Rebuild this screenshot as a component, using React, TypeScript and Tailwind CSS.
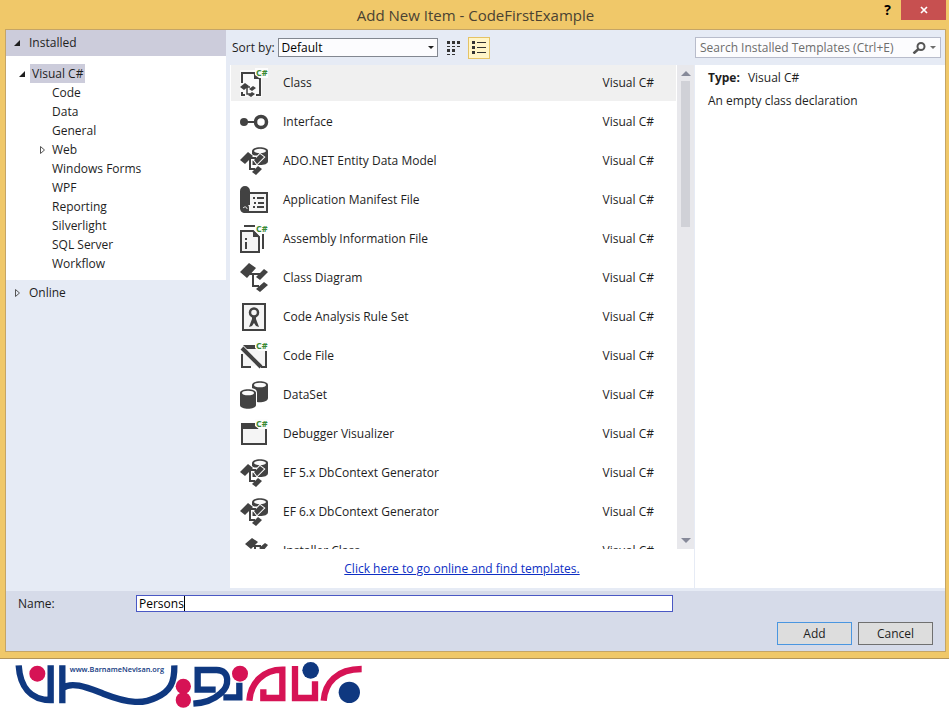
import { useState, type ReactNode } from 'react';

type IconName =
  | 'class'
  | 'interface'
  | 'entity'
  | 'manifest'
  | 'assembly'
  | 'diagram'
  | 'ruleset'
  | 'codefile'
  | 'dataset'
  | 'visualizer'
  | 'installer';

const templates: { name: string; icon: IconName }[] = [
  { name: 'Class', icon: 'class' },
  { name: 'Interface', icon: 'interface' },
  { name: 'ADO.NET Entity Data Model', icon: 'entity' },
  { name: 'Application Manifest File', icon: 'manifest' },
  { name: 'Assembly Information File', icon: 'assembly' },
  { name: 'Class Diagram', icon: 'diagram' },
  { name: 'Code Analysis Rule Set', icon: 'ruleset' },
  { name: 'Code File', icon: 'codefile' },
  { name: 'DataSet', icon: 'dataset' },
  { name: 'Debugger Visualizer', icon: 'visualizer' },
  { name: 'EF 5.x DbContext Generator', icon: 'entity' },
  { name: 'EF 6.x DbContext Generator', icon: 'entity' },
  { name: 'Installer Class', icon: 'installer' },
];

const categories = [
  'Code',
  'Data',
  'General',
  'Web',
  'Windows Forms',
  'WPF',
  'Reporting',
  'Silverlight',
  'SQL Server',
  'Workflow',
];

const DARK = '#424242';

function CSharpMark() {
  return (
    <>
      <path d="M15 -1h13v10H19l-4-3z" fill="#fdfdfd" />
      <text x="16" y="7" fontSize="9" fontWeight="700" fill="#388a34" fontFamily="'Open Sans', sans-serif">
        C#
      </text>
    </>
  );
}

const drawings: Record<IconName, ReactNode> = {
  class: (
    <>
      <path d="M0 1h22v27H0z" fill="#fafafa" />
      <path d="M2 14V4h12l6 6v16h-4" fill="none" stroke={DARK} strokeWidth="2" />
      <path d="M14 3l7 7h-7z" fill={DARK} />
      <path d="M0 18l5-4 4 3-5 4zM9 20l4-3 3 2-4 3zM8 26l4-3 3 2-4 3zM1 23h2v2h2v2H1z" fill={DARK} />
      <path d="M4 18h6M7 18v7h3" fill="none" stroke={DARK} strokeWidth="1.5" />
      <CSharpMark />
    </>
  ),
  interface: (
    <>
      <circle cx="4" cy="14" r="4" fill={DARK} />
      <path d="M7 14h8" stroke={DARK} strokeWidth="2" />
      <circle cx="21" cy="14" r="5.5" fill="none" stroke={DARK} strokeWidth="3.5" />
    </>
  ),
  entity: (
    <>
      <path d="M12 4c0-5 16-5 16 0v10c0 3-4 4-8 4h-8z" fill={DARK} />
      <ellipse cx="20" cy="4" rx="6" ry="2.2" fill="#fafafa" />
      <path d="M7 11h10M10 11v11h6" fill="none" stroke="#ffffff" strokeWidth="5" />
      <path
        d="M0 13l8-8 5 4-8 8zM14 13l6-6 4 3-7 7zM12 25l6-6 4 3-6 6z"
        fill={DARK}
        stroke="#ffffff"
        strokeWidth="2"
        paintOrder="stroke"
      />
      <path d="M8 11h8M10 11v11h5" fill="none" stroke={DARK} strokeWidth="2" />
    </>
  ),
  manifest: (
    <>
      <path d="M9 7h18v19H7" fill="#f5f5f5" stroke={DARK} strokeWidth="2" />
      <path d="M0 5a5 5 0 0 1 10 0v14H5c-3 0-5 2-5 4z" fill={DARK} />
      <path d="M0 22c0-6 9-5 9-1v6H5c-3 0-5-2-5-5z" fill={DARK} />
      <path d="M3 22c2-2 4-1 4 1" fill="none" stroke="#f5f5f5" strokeWidth="1" />
      <path d="M13 12h2M17 12h7M14 17h2M18 17h6M13 21h2M17 21h7" stroke={DARK} strokeWidth="2" />
    </>
  ),
  assembly: (
    <>
      <path d="M4 1h12M23 8v16" fill="none" stroke={DARK} strokeWidth="2" />
      <path d="M1 6h12l6 6v15H1z" fill="#f5f5f5" stroke={DARK} strokeWidth="2" />
      <path d="M13 5l7 7h-7z" fill={DARK} />
      <path d="M6 13v2M6 17v7" stroke={DARK} strokeWidth="2" />
      <CSharpMark />
    </>
  ),
  diagram: (
    <>
      <path d="M0 8L9-1l7 5-9 10zM16 13l8-8 4 3-8 8zM16 25l8-7 4 3-8 7z" fill={DARK} />
      <path d="M10 10h10M13 10v12h6" fill="none" stroke={DARK} strokeWidth="2" />
    </>
  ),
  ruleset: (
    <>
      <rect x="3" y="1" width="22" height="26" fill="#f5f5f5" stroke={DARK} strokeWidth="2" />
      <circle cx="14" cy="9.5" r="4" fill="none" stroke={DARK} strokeWidth="2.5" />
      <path d="M12 14h4v2l3 8-3-1-2-3-2 3-3 1 3-8z" fill={DARK} />
    </>
  ),
  codefile: (
    <>
      <path d="M2 4h24v20H2z" fill="#f5f5f5" />
      <path d="M3 3h15v4H7z" fill={DARK} />
      <path d="M2 12v13h9M26 9v16h-5" fill="none" stroke={DARK} strokeWidth="2" />
      <path d="M2 6l19 19" stroke={DARK} strokeWidth="4" />
      <CSharpMark />
    </>
  ),
  dataset: (
    <>
      <path d="M12 4c0-5 16-5 16 0v13c0 4-8 5-11 4V12c0-4-3-4-5-5z" fill={DARK} />
      <ellipse cx="20" cy="4" rx="6" ry="2.3" fill="#fafafa" />
      <path d="M0 12c0-5 16-5 16 0v12c0 5-16 5-16 0z" fill={DARK} />
      <ellipse cx="8" cy="12" rx="6" ry="2.3" fill="#fafafa" />
    </>
  ),
  visualizer: (
    <>
      <path d="M2 4h24v20H2z" fill="#f5f5f5" stroke={DARK} strokeWidth="2" />
      <path d="M1 3h15v3l3 3H1z" fill={DARK} />
      <CSharpMark />
    </>
  ),
  installer: (
    <>
      <path d="M5 7l7-6 6 4-7 7zM19 11l6-5 3 2-5 6zM18 25l6-6 4 3-6 6z" fill={DARK} />
      <path d="M12 9h9M15 9v13h5" fill="none" stroke={DARK} strokeWidth="2" />
    </>
  ),
};

function TemplateIcon({ name }: { name: IconName }) {
  return (
    <svg viewBox="0 0 28 28" className="w-7 h-7 overflow-visible shrink-0" aria-hidden="true">
      {drawings[name]}
    </svg>
  );
}

function ExpandedArrow() {
  return (
    <svg viewBox="0 0 8 8" className="w-2 h-2 shrink-0" aria-hidden="true">
      <path d="M7 1v6H1z" fill="#1e1e1e" />
    </svg>
  );
}

function CollapsedArrow() {
  return (
    <svg viewBox="0 0 8 8" className="w-2 h-2 shrink-0" aria-hidden="true">
      <path d="M2.5 0.5v7l4-3.500z" fill="none" stroke="#555555" />
    </svg>
  );
}

function TitleBar() {
  return (
    <header className="relative flex justify-center items-center h-[29px]">
      <h1 className="text-[#4a4232] text-[15px] leading-5">Add New Item - CodeFirstExample</h1>
      <div className="top-0 right-0 absolute flex items-start">
        <button className="px-[10px] h-5 font-bold text-[14px] text-black leading-5" title="Help">
          ?
        </button>
        <button className="flex justify-center items-center bg-[#c75050] w-[45px] h-5" title="Close">
          <svg viewBox="0 0 8 8" className="w-2 h-2" aria-hidden="true">
            <path d="M1 1l6 6M7 1L1 7" stroke="#ffffff" strokeWidth="1.7" />
          </svg>
        </button>
      </div>
    </header>
  );
}

function Sidebar() {
  return (
    <nav className="bg-[#e6ebf5] w-[220px] shrink-0">
      <button className="flex items-center gap-2 bg-[#ccccdb] px-[7px] w-full h-[26px]">
        <ExpandedArrow />
        Installed
      </button>
      <div className="bg-white pt-2 pb-[7px]">
        <button className="flex items-center gap-1 pl-3 h-[19px]">
          <ExpandedArrow />
          <span className="bg-[#ccccdb] px-[2px] leading-[19px]">Visual C#</span>
        </button>
        <ul>
          {categories.map((category) => (
            <li key={category} className="flex items-center gap-[6px] pl-8 h-[19px]">
              {category === 'Web' ? <CollapsedArrow /> : <span className="w-2" />}
              <button>{category}</button>
            </li>
          ))}
        </ul>
      </div>
      <button className="flex items-center gap-2 px-[7px] h-[26px]">
        <CollapsedArrow />
        Online
      </button>
    </nav>
  );
}

function Toolbar() {
  return (
    <div className="flex items-center pl-[6px] h-[35px]">
      <label htmlFor="sort" className="mr-[3px]">
        Sort by:
      </label>
      <div className="relative">
        <select
          id="sort"
          className="bg-[#fcfcfe] px-[3px] border border-[#828790] w-40 h-[19px] text-black leading-4 appearance-none"
        >
          <option>Default</option>
        </select>
        <svg viewBox="0 0 6 4" className="top-2 right-1 absolute w-[6px] h-1 pointer-events-none" aria-hidden="true">
          <path d="M0 0h6L3 3z" fill="#1e1e1e" />
        </svg>
      </div>
      <button className="flex justify-center items-center ml-[5px] w-[22px] h-[22px]" title="Small Icons">
        <svg viewBox="0 0 14 14" className="w-[14px] h-[14px]" aria-hidden="true">
          <path d="M0 0h3v3H0zM5 0h3v3H5zM10 0h3v3h-3zM0 8h3v3H0zM5 8h3v3H5z" fill="#333333" />
          <path d="M0 5.500h3M5 5.500h3M10 5.500h3M0 13.500h3M5 13.500h3" stroke="#333333" />
        </svg>
      </button>
      <button
        className="flex justify-center items-center bg-[#fff5c8] ml-[3px] border border-[#e5c365] w-[22px] h-[22px]"
        title="Medium Icons"
      >
        <svg viewBox="0 0 14 14" className="w-[14px] h-[14px]" aria-hidden="true">
          <path d="M0 0h3v3H0zM0 5h3v3H0zM0 10h3v3H0z" fill="#333333" />
          <path d="M5 1.500h9M5 6.500h9M5 11.500h9" stroke="#333333" />
        </svg>
      </button>
    </div>
  );
}

function ScrollBar() {
  return (
    <div className="flex flex-col items-center bg-[#e8e8ec] py-[6px] w-[17px] shrink-0">
      <svg viewBox="0 0 10 5" className="w-[10px] h-[5px]" aria-hidden="true">
        <path d="M0 5h10L5 0z" fill="#868999" />
      </svg>
      <div className="bg-[#d0d1d7] mt-[5px] w-[9px] h-[146px]" />
      <svg viewBox="0 0 10 5" className="mt-auto w-[10px] h-[5px]" aria-hidden="true">
        <path d="M0 0h10L5 5z" fill="#868999" />
      </svg>
    </div>
  );
}

function TemplateList() {
  const [selected, setSelected] = useState('Class');

  return (
    <div className="bg-white ml-1 border-[#e6ebf5] border-r">
      <div className="flex h-[484px] overflow-hidden">
        <ul className="flex-1 space-y-[3px] px-px">
          {templates.map((template) => (
            <li key={template.name}>
              <button
                onClick={() => setSelected(template.name)}
                className={
                  template.name === selected
                    ? 'flex items-center gap-[15px] bg-[#f0f0f0] pl-[9px] pr-[22px] w-full h-9 text-left'
                    : 'flex items-center gap-[15px] pl-[9px] pr-[22px] w-full h-9 text-left'
                }
              >
                <TemplateIcon name={template.icon} />
                <span className="flex-1">{template.name}</span>
                <span>Visual C#</span>
              </button>
            </li>
          ))}
        </ul>
        <ScrollBar />
      </div>
      <div className="flex justify-center items-center h-[39px]">
        <a href="#online" className="text-[#0e2fc4] underline">
          Click here to go online and find templates.
        </a>
      </div>
    </div>
  );
}

function Details() {
  return (
    <aside className="flex flex-col w-[250px] shrink-0">
      <div className="flex items-center pr-1 h-[35px]">
        <div className="flex items-center bg-[#fcfcfe] px-1 border border-[#b8bccb] w-full h-[21px]">
          <input
            aria-label="Search Installed Templates"
            placeholder="Search Installed Templates (Ctrl+E)"
            className="flex-1 bg-transparent outline-none min-w-0 placeholder:text-[#6d6d6d]"
          />
          <svg viewBox="0 0 14 12" className="w-[14px] h-3 shrink-0" aria-hidden="true">
            <circle cx="9" cy="4.5" r="3.5" fill="none" stroke="#555555" strokeWidth="2" />
            <path d="M6.5 7L1.500 11.500" stroke="#555555" strokeWidth="2.5" />
          </svg>
          <svg viewBox="0 0 6 4" className="ml-1 w-[6px] h-1 shrink-0" aria-hidden="true">
            <path d="M0 0h6L3 3z" fill="#6d6d6d" />
          </svg>
        </div>
      </div>
      <div className="flex-1 bg-white px-[13px] py-1 leading-[18px]">
        <p>
          <strong className="mr-2">Type:</strong>
          Visual C#
        </p>
        <p className="mt-[5px]">An empty class declaration</p>
      </div>
    </aside>
  );
}

function Footer() {
  const [name, setName] = useState('Persons');

  return (
    <footer className="bg-[#d6dbe9] px-3 pt-1 pb-[6px] border-[#e6ebf5] border-t-[3px]">
      <div className="flex items-center pr-[260px]">
        <label htmlFor="item-name" className="w-[118px]">
          Name:
        </label>
        <div className="flex flex-1 bg-white px-[2px] border border-[#4a58c4] h-[17px]">
          <input
            id="item-name"
            value={name}
            onChange={(e) => setName(e.target.value)}
            className="outline-none h-[15px] text-black leading-[15px] field-sizing-content"
          />
          <span className="bg-black w-px h-[15px]" />
        </div>
      </div>
      <div className="flex justify-end gap-[6px] mt-[10px]">
        <button className="bg-[#dddddd] border border-[#4a96e0] w-[75px] h-[23px]">Add</button>
        <button className="bg-[#dddddd] border border-[#707070] w-[75px] h-[23px]">Cancel</button>
      </div>
    </footer>
  );
}

function Logo() {
  return (
    <svg viewBox="0 3 1110 150" className="w-[370px] h-[50px]" role="img" aria-label="Barname Nevisan">
      <g fill="none" stroke="#0f3880" strokeWidth="19">
        <path d="M56 22C60 84 90 126 152 126V22" />
        <path d="M187 22V136M187 91C215 68 265 90 310 107C390 138 430 138 470 118C510 100 524 75 523 22" />
        <path d="M647 95H593V36H650C692 36 688 85 662 106C642 124 615 135 580 137M670 118H718V74" />
      </g>
      <g fill="none" stroke="#d61355" strokeWidth="19">
        <path d="M748 128C752 75 790 35 847 35V120H790V94" />
        <path d="M885 24V120H945V70M971 128C975 75 1010 33 1085 33" />
      </g>
      <g fill="#d61355">
        <circle cx="112" cy="47" r="24" />
        <circle cx="550" cy="85" r="23" />
        <circle cx="550" cy="126" r="23" />
        <circle cx="720" cy="47" r="24" />
      </g>
      <circle cx="932" cy="37" r="25" fill="#0f3880" />
      <circle cx="1048" cy="103" r="32" fill="#0f3880" />
      <text
        x="209"
        y="41"
        fontSize="22"
        fontWeight="600"
        fill="#0f3880"
        fontFamily="'Open Sans', sans-serif"
      >
        www.BarnameNevisan.org
      </text>
    </svg>
  );
}

export default function App() {
  return (
    <div className="bg-white min-h-screen font-['Open_Sans','Noto_Sans',sans-serif] text-[#1e1e1e] text-[12px] leading-4">
      <div className="bg-[#f0c869] pr-[3px] pb-[6px] pl-[5px] border-[#b3945a] border-b">
        <TitleBar />
        <div className="bg-[#e6ebf5] border border-[#c5a566]">
          <div className="flex">
            <Sidebar />
            <main className="flex-1 min-w-0">
              <Toolbar />
              <TemplateList />
            </main>
            <Details />
          </div>
          <Footer />
        </div>
      </div>
      <Logo />
    </div>
  );
}
